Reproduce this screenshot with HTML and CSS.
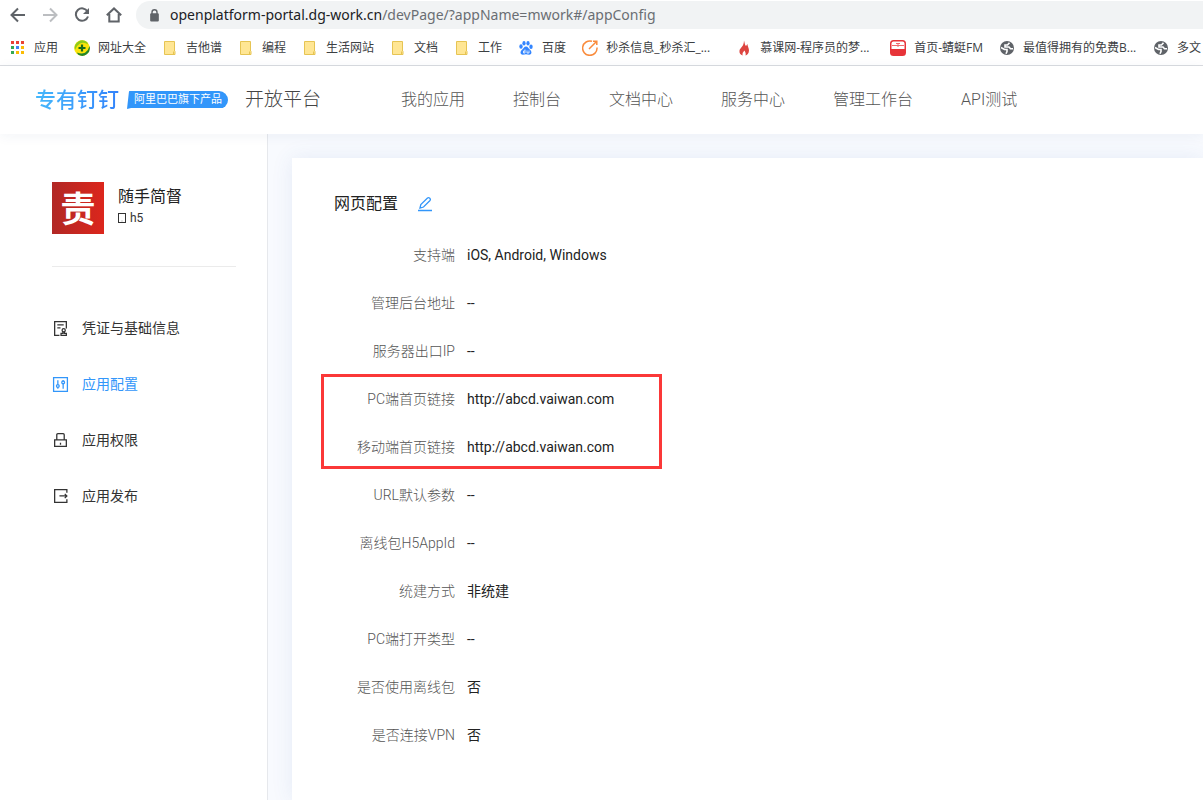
FILE: index.html
```html
<!DOCTYPE html>
<html lang="zh-CN">
<head>
<meta charset="utf-8">
<meta name="viewport" content="width=device-width, initial-scale=1">
<title>开放平台</title>
<link rel="stylesheet" href="styles.css">
</head>
<body>
<svg class="defs" width="0" height="0" aria-hidden="true">
  <symbol id="folder" viewBox="0 0 16 16"><path d="M2.500 1.500h10v9.500l.5.500v3H2.500z" fill="#ffe694" stroke="#e6c453"/><path d="M11.500 11.500v3" stroke="#e6c453"/></symbol>
  <symbol id="globe" viewBox="0 0 16 16"><circle cx="8" cy="8" r="7" fill="#5f6368"/><path d="M10.500 2.800 8.500 5H6v2h4l1.500 1.800H14M2 7.500l3.500 2H8v2l-1 2.300" fill="none" stroke="#fff" stroke-width="1.600"/></symbol>
</svg>
<header class="browser">
  <div class="toolbar">
    <button class="tool" aria-label="后退"><svg viewBox="0 0 16 16"><path d="M15 8H2M8 1.500 1.500 8 8 14.500" fill="none" stroke="#5f6368" stroke-width="2"/></svg></button>
    <button class="tool" aria-label="前进"><svg viewBox="0 0 16 16"><path d="M1 8h13M8 1.500 14.500 8 8 14.500" fill="none" stroke="#bcbec1" stroke-width="2"/></svg></button>
    <button class="tool" aria-label="刷新"><svg viewBox="0 0 16 16"><path d="M13.500 4.500A6.200 6.200 0 1 0 14 9.500" fill="none" stroke="#5f6368" stroke-width="2"/><path d="M15 1v6H9z" fill="#5f6368"/></svg></button>
    <button class="tool" aria-label="主页"><svg viewBox="0 0 16 16"><path d="M.8 8.300 8 1.500l7.200 6.800M3.300 7v7.500h9.400V7" fill="none" stroke="#5f6368" stroke-width="2"/></svg></button>
    <div class="address">
      <svg class="lock" viewBox="0 0 10 12"><rect x="1" y="4" width="8" height="7.500" rx="1" fill="#5f6368"/><path d="M2.700 5V3a2.300 2.300 0 0 1 4.600 0v2" fill="none" stroke="#5f6368" stroke-width="1.300"/></svg>
      <span>openplatform-portal.dg-work.cn<span class="path">/devPage/?appName=mwork#/appConfig</span></span>
    </div>
  </div>
  <nav class="bookmarks" aria-label="书签">
    <a href="#"><svg viewBox="0 0 16 16"><path d="M1 1h3v3H1zM6 1h3v3H6zM11 1h3v3h-3z" fill="#ea4335"/><path d="M1 6h3v3H1zM1 11h3v3H1z" fill="#34a853"/><path d="M6 6h3v3H6z" fill="#4285f4"/><path d="M11 6h3v3h-3zM6 11h3v3H6zM11 11h3v3h-3z" fill="#fbbc05"/></svg><span>应用</span></a>
    <a href="#"><svg viewBox="0 0 16 16"><circle cx="8" cy="8" r="7.800" fill="#fbe40a"/><path d="M1 10A7.600 7.600 0 0 1 13 2l1 2.500Q10 1.500 6 3.500 2.500 5.500 1 10z" fill="#8ccb1c"/><path d="M15.500 6A7.600 7.600 0 0 1 4 14.500l-1-2q4 2 8 .3Q14.500 10.500 15.500 6z" fill="#23862a"/><path d="M8 4.500v7M4.500 8h7" stroke="#176b1c" stroke-width="2.200"/></svg><span>网址大全</span></a>
    <a href="#"><svg><use href="#folder"/></svg><span>吉他谱</span></a>
    <a href="#"><svg><use href="#folder"/></svg><span>编程</span></a>
    <a href="#"><svg><use href="#folder"/></svg><span>生活网站</span></a>
    <a href="#"><svg><use href="#folder"/></svg><span>文档</span></a>
    <a href="#"><svg><use href="#folder"/></svg><span>工作</span></a>
    <a href="#"><svg viewBox="0 0 16 16"><g fill="#3385ff"><ellipse cx="3" cy="6.500" rx="1.700" ry="2.200"/><ellipse cx="6" cy="3.200" rx="1.600" ry="2.200"/><ellipse cx="10" cy="3.200" rx="1.600" ry="2.200"/><ellipse cx="13" cy="6.700" rx="1.700" ry="2.200"/><path d="M8 6.500c2 0 2.500 2 4 3.200 2.500 2 1.500 5-.8 5-1.200 0-2-.4-3.200-.4s-2 .4-3.200.4c-2.300 0-3.300-3-.8-5C5.500 8.500 6 6.500 8 6.500z"/></g><path d="M7 9.500V13H5.500v-2H7M9 10.500V13h2v-2.500" fill="none" stroke="#fff" stroke-width=".8"/></svg><span>百度</span></a>
    <a href="#" class="long"><svg viewBox="0 0 16 16"><path d="M10 1.300A7.200 7.200 0 1 0 15 7.500M7 9l7.500-7.500M11 1.300h3.800v3.800" fill="none" stroke="#f98b3c" stroke-width="1.500"/></svg><span>秒杀信息_秒杀汇_...</span></a>
    <a href="#" class="long"><svg viewBox="0 0 16 16"><path d="M8 .5c1 3 .5 4 2 5.500l1.500-2c-.2 2 1.500 4 1.500 6.500 0 3-2 4.500-3.500 5 .8-2.500-.5-3.500-1-5-1.500 1.500-2.500 3-1.800 5C4.500 15 3 13 3.500 10.500 4 8 8 6.500 8 .5z" fill="#dd4540"/></svg><span>慕课网-程序员的梦...</span></a>
    <a href="#"><svg viewBox="0 0 16 16"><rect width="16" height="16" rx="3.500" fill="#e73439"/><path d="M1.500 3.500q0-2 2-2h9q2 0 2 2V9h-13z" fill="#fff"/><path d="M2 5.500h4M10 5.500h4M6 3.500h4M6 5.500h4M8 3v4" stroke="#f06b6e" stroke-width="1"/></svg><span>首页-蜻蜓FM</span></a>
    <a href="#" class="long"><svg><use href="#globe"/></svg><span>最值得拥有的免费B...</span></a>
    <a href="#"><svg><use href="#globe"/></svg><span>多文</span></a>
  </nav>
</header>
<header class="site">
  <a class="brand" href="#" aria-label="专有钉钉">
    <span class="brand-name">专有钉钉</span>
    <span class="brand-tag">阿里巴巴旗下产品</span>
  </a>
  <span class="platform">开放平台</span>
  <nav class="menu">
    <a href="#">我的应用</a><a href="#">控制台</a><a href="#">文档中心</a><a href="#">服务中心</a><a href="#">管理工作台</a><a href="#">API测试</a>
  </nav>
</header>
<div class="layout">
  <aside class="sidebar">
    <div class="app">
      <div class="app-logo">责</div>
      <div>
        <div class="app-name">随手简督</div>
        <div class="app-type"><svg viewBox="0 0 8 11"><rect x=".5" y=".5" width="7" height="9" fill="none" stroke="#333"/><path d="M3.500 8h1" stroke="#999"/></svg>h5</div>
      </div>
    </div>
    <nav class="side-nav">
      <a href="#"><svg viewBox="0 0 16 16"><path d="M7 14.500H2.500v-13h11V8M5 4.500h6M5 7.500h3" /><circle cx="11" cy="9.700" r="1.500"/><path d="M10.300 11v1.500h-1.800v2h5v-2h-1.800V11"/></svg>凭证与基础信息</a>
      <a href="#" class="active" aria-current="page"><svg viewBox="0 0 16 16"><path d="M1.500 1.500h13v13h-13zM5.500 4v4M5.500 10.500V12M10.500 4v1M10.500 7.500V12"/><circle cx="5.500" cy="9.500" r="1.300"/><circle cx="10.500" cy="6" r="1.300"/></svg>应用配置</a>
      <a href="#"><svg viewBox="0 0 16 16"><path d="M2.500 7.500h11v6h-11zM4.500 7.500v-5q0-1 1-1h5q1 0 1 1v5M8 10v2"/></svg>应用权限</a>
      <a href="#"><svg viewBox="0 0 16 16"><path d="M14 4.500v-3H2.500v12H14v-3M7 7.500h7M12 5.500l2 2-2 2"/></svg>应用发布</a>
    </nav>
  </aside>
  <main class="content">
    <section class="card">
      <div class="card-head"><h1>网页配置</h1><button class="edit" aria-label="编辑"><svg viewBox="0 0 16 16"><path d="M1 14.500h14M3 12l.8-3.500L10.500 2q1-.8 2 0l.5.500q.8 1 0 2L6.500 11z" fill="none" stroke="#3296fa" stroke-width="1.300"/></svg></button></div>
      <dl class="fields">
        <div class="field"><dt>支持端</dt><dd>iOS, Android, Windows</dd></div>
        <div class="field"><dt>管理后台地址</dt><dd>--</dd></div>
        <div class="field"><dt>服务器出口IP</dt><dd>--</dd></div>
        <div class="marked">
          <div class="field"><dt>PC端首页链接</dt><dd>http://abcd.vaiwan.com</dd></div>
          <div class="field"><dt>移动端首页链接</dt><dd>http://abcd.vaiwan.com</dd></div>
        </div>
        <div class="field"><dt>URL默认参数</dt><dd>--</dd></div>
        <div class="field"><dt>离线包H5AppId</dt><dd>--</dd></div>
        <div class="field"><dt>统建方式</dt><dd>非统建</dd></div>
        <div class="field"><dt>PC端打开类型</dt><dd>--</dd></div>
        <div class="field"><dt>是否使用离线包</dt><dd>否</dd></div>
        <div class="field"><dt>是否连接VPN</dt><dd>否</dd></div>
      </dl>
    </section>
  </main>
</div>
</body>
</html>
```

FILE: styles.css
```css
* { box-sizing: border-box; }
body {
  margin: 0;
  min-height: 100vh;
  display: flex;
  flex-direction: column;
  overflow-x: hidden;
  background: #fff;
  color: #222;
  font: 14px/24px Roboto, "Noto Sans CJK SC", sans-serif;
}
a { color: inherit; text-decoration: none; }
button { border: 0; padding: 0; background: none; display: block; }
svg { display: block; flex: none; }
.defs { position: absolute; }

/* browser chrome */
.browser { border-bottom: 1px solid #dadce0; flex: none; }
.toolbar { display: flex; align-items: center; gap: 16px; height: 30px; padding-left: 10px; }
.tool svg { width: 16px; height: 16px; }
.address {
  flex: 1;
  display: flex;
  align-items: center;
  gap: 10px;
  height: 28px;
  margin-left: -2px;
  padding-left: 13px;
  border-radius: 14px 0 0 14px;
  background: #f1f3f4;
  color: #202124;
  font: 14px/28px "Noto Sans", sans-serif;
  white-space: nowrap;
}
.address .path { color: #6a6e73; }
.lock { width: 11px; height: 13px; }
.bookmarks {
  display: flex;
  gap: 16px;
  height: 35px;
  padding-left: 10px;
  align-items: center;
  overflow: hidden;
  color: #3c4043;
  font: 12px/18px "Open Sans", "Noto Sans CJK SC", sans-serif;
  white-space: nowrap;
}
.bookmarks a { display: flex; gap: 8px; align-items: center; flex: none; }
.bookmarks svg { width: 16px; height: 16px; }
.long span { width: 114px; overflow: hidden; }

/* site header */
.site {
  position: relative;
  z-index: 1;
  display: flex;
  align-items: center;
  flex: none;
  height: 68px;
  padding-left: 35px;
  background: #fff;
  box-shadow: 0 2px 12px rgba(30, 60, 120, .06);
  white-space: nowrap;
}
.brand { display: flex; align-items: center; gap: 8px; }
.brand-name {
  font-size: 21px;
  font-weight: 500;
  background: linear-gradient(90deg, #45b8fb, #3383fb);
  background-clip: text;
  color: transparent;
}
.brand-tag {
  width: 101px;
  padding-left: 7px;
  background: #3296fa;
  border-radius: 3px 9px 9px 0;
  clip-path: polygon(2% 0, 100% 0, 100% 95%, 4% 95%, 0 100%);
  color: #fff;
  font-size: 11px;
  line-height: 18px;
}
.platform { margin-left: 17px; color: #444; font-size: 19px; font-weight: 300; }
.menu { display: flex; gap: 48px; margin-left: 80px; color: #555; font-size: 16px; font-weight: 300; }

/* page */
.layout { flex: 1; display: flex; }
.sidebar { width: 268px; flex: none; padding: 48px 31px 0 52px; border-right: 1px solid #e6e8ec; }
.app { display: flex; gap: 14px; height: 85px; border-bottom: 1px solid #ebebeb; }
.app-logo {
  width: 52px;
  height: 52px;
  flex: none;
  background: linear-gradient(90deg, #b12825, #dc261c);
  color: #fff;
  font: 700 35px/50px "Noto Sans CJK SC", sans-serif;
  text-align: center;
}
.app-name { padding-top: 3px; font-size: 16px; }
.app-type { display: flex; align-items: center; gap: 4px; font-size: 12px; line-height: 18px; color: #333; }
.app-type svg { width: 8px; height: 11px; }
.side-nav { display: grid; gap: 32px; padding-top: 49px; color: #333; }
.side-nav a { display: flex; align-items: center; gap: 13px; }
.side-nav svg { width: 17px; height: 17px; fill: none; stroke: currentColor; stroke-width: 1.2; }
.side-nav .active { color: #3296fa; }
.content { flex: 1; min-width: 0; padding: 24px 0 0 24px; background: #f8fafe; }
.card { height: 100%; padding: 34px 0 24px 42px; background: #fff; box-shadow: 0 0 20px rgba(60, 100, 180, .1); }
.card-head { display: flex; align-items: center; gap: 19px; }
h1 { margin: 0; font-size: 16px; font-weight: 400; line-height: 24px; }
.edit svg { width: 16px; height: 16px; }
.fields { margin: 27px 0 0; display: grid; gap: 24px; }
.field { display: flex; gap: 12px; }
.field dt { width: 121px; flex: none; text-align: right; color: #555; font-weight: 300; }
.field dd { margin: 0; }
.marked {
  display: grid;
  gap: 24px;
  width: 341px;
  margin: -13px 0 -10px -13px;
  padding: 10px 0 7px 10px;
  border: 3px solid #fb3838;
}
```
